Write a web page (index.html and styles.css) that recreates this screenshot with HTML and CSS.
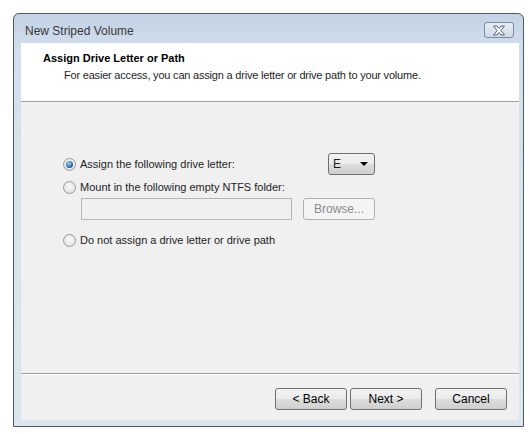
FILE: index.html
```html
<!DOCTYPE html>
<html lang="en">
<head>
    <meta charset="UTF-8">
    <title>New Striped Volume</title>
    <link rel="stylesheet" href="styles.css">
</head>
<body>
    <div class="window">
        <div class="titlebar">
            <span class="title">New Striped Volume</span>
            <span class="close-btn">
                <svg width="16" height="11" viewBox="0 0 16 11">
                    <path d="M2.5 1 L6 1 L8 3.5 L10 1 L13.5 1 L9.8 5.5 L13.5 10 L10 10 L8 7.5 L6 10 L2.5 10 L6.2 5.5 Z" fill="#fff" stroke="#53647a" stroke-width="1" stroke-linejoin="round"/>
                </svg>
            </span>
        </div>

        <div class="client">
            <header class="wizard-head">
                <h1>Assign Drive Letter or Path</h1>
                <p>For easier access, you can assign a drive letter or drive path to your volume.</p>
            </header>

            <main class="wizard-body">
                <div class="options">
                    <div class="row first">
                        <span class="radio checked"></span>
                        <span class="label">Assign the following drive letter:</span>
                        <span class="combo">E<span class="arrow"></span></span>
                    </div>
                    <div class="row">
                        <span class="radio"></span>
                        <span class="label">Mount in the following empty NTFS folder:</span>
                    </div>
                    <div class="folder-row">
                        <span class="textbox"></span>
                        <span class="btn disabled">Browse...</span>
                    </div>
                    <div class="row">
                        <span class="radio"></span>
                        <span class="label">Do not assign a drive letter or drive path</span>
                    </div>
                </div>
            </main>

            <footer class="wizard-foot">
                <span class="btn">&lt; Back</span>
                <span class="btn">Next &gt;</span>
                <span class="btn cancel">Cancel</span>
            </footer>
        </div>
    </div>
</body>
</html>
```

FILE: styles.css
```css
body {
    margin: 0;
    background-color: #fff;
    font-family: 'Liberation Sans', Arial, sans-serif;
    font-size: 11px;
    color: #1e1e1e;
}

.window {
    box-sizing: border-box;
    width: 511px;
    height: 414px;
    margin: 13px 0 0 13px;
    border: 1px solid #4f5966;
    border-radius: 6px 6px 0 0;
    background: linear-gradient(#c3d3e5, #d3dfec 40px, #dce6f1);
    display: flex;
    flex-direction: column;
    padding: 0 4px 6px 7px;
}

.titlebar {
    height: 29px;
    display: flex;
    align-items: center;
    justify-content: space-between;
}

.title {
    margin: 5px 0 0 4px;
    font-size: 12px;
    color: #3a3a3a;
}

.close-btn {
    box-sizing: border-box;
    width: 30px;
    height: 16px;
    margin: 3px 5px 0 0;
    border: 1px solid #7d8a9b;
    border-radius: 3px;
    background: linear-gradient(#e6edf5, #cfdae7);
    display: flex;
    align-items: center;
    justify-content: center;
}

.client {
    flex: 1;
    display: flex;
    flex-direction: column;
    background-color: #f0f0f0;
}

.wizard-head {
    height: 58px;
    background-color: #fff;
    border-bottom: 1px solid #a0a0a0;
    padding: 0 0 0 22px;
}

.wizard-head h1 {
    margin: 9px 0 0;
    font-size: 11px;
    font-weight: bold;
    color: #000;
}

.wizard-head p {
    margin: 5px 0 0 21px;
    letter-spacing: -0.2px;
}

.wizard-body {
    flex: 1;
    border-bottom: 1px solid #a0a0a0;
    box-shadow: 0 1px 0 #fff;
}

.options {
    width: 312px;
    margin: 51px 0 0 42px;
}

.row {
    display: flex;
    align-items: center;
    height: 16px;
    margin-top: 4px;
}

.row.first {
    height: 22px;
    margin-top: 0;
}

.label {
    margin-left: 4px;
}

.radio {
    box-sizing: border-box;
    width: 13px;
    height: 13px;
    border-radius: 50%;
    border: 1px solid #9a9a9a;
    background: radial-gradient(circle at 50% 40%, #fafafa, #dcdcdc);
    position: relative;
}

.radio.checked::after {
    content: "";
    position: absolute;
    left: 2px;
    top: 2px;
    width: 7px;
    height: 7px;
    border-radius: 50%;
    background: radial-gradient(circle at 40% 35%, #9fd3f5, #2b6ea6 60%, #1d3f63);
}

.combo {
    box-sizing: border-box;
    margin-left: auto;
    width: 47px;
    height: 22px;
    border: 1px solid #707070;
    border-radius: 3px;
    background: linear-gradient(#f2f2f2, #ebebeb 50%, #dddddd 50%, #cfcfcf);
    display: flex;
    align-items: center;
    padding-left: 4px;
    font-size: 12px;
}

.arrow {
    margin-left: auto;
    margin-right: 6px;
    border-left: 4px solid transparent;
    border-right: 4px solid transparent;
    border-top: 4px solid #000;
}

.folder-row {
    display: flex;
    justify-content: space-between;
    margin: 3px 0 0 18px;
}

.textbox {
    box-sizing: border-box;
    width: 211px;
    height: 22px;
    border: 1px solid #b5b5b5;
    background-color: #f0f0f0;
}

.btn {
    box-sizing: border-box;
    width: 72px;
    height: 22px;
    border: 1px solid #707070;
    border-radius: 3px;
    background: linear-gradient(#f2f2f2, #ebebeb 50%, #dddddd 50%, #cfcfcf);
    display: flex;
    align-items: center;
    justify-content: center;
    font-size: 12px;
    color: #000;
}

.btn.disabled {
    border-color: #adb2b5;
    background: #f4f4f4;
    color: #8a8a8a;
}

.folder-row + .row {
    margin-top: 12px;
}

.wizard-foot {
    height: 46px;
    box-sizing: border-box;
    display: flex;
    align-items: flex-start;
    justify-content: flex-end;
    gap: 3px;
    padding: 14px 12px 0 0;
}

.btn.cancel {
    margin-left: 10px;
}
```
